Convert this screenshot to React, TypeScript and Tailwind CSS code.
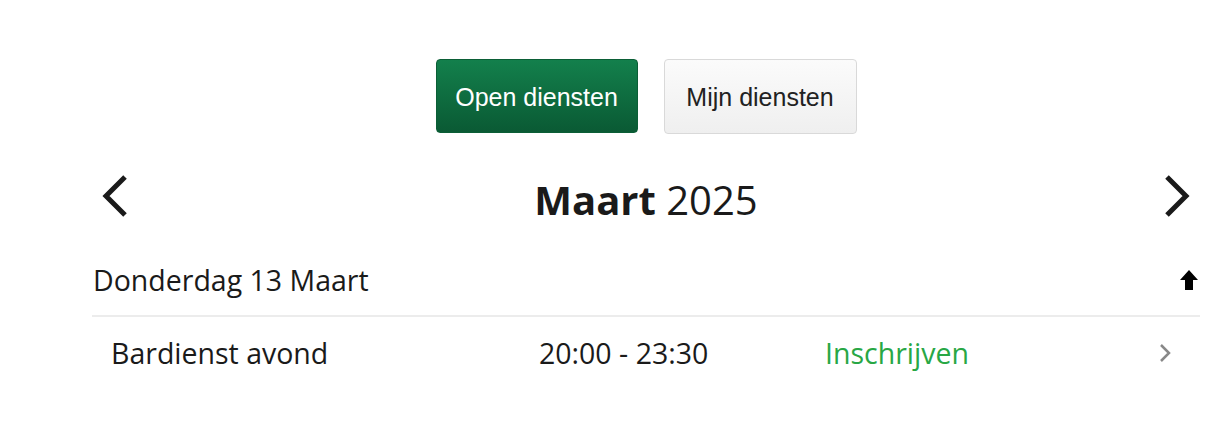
import React from "react";

export default function App() {
  return (
    <div className="w-[1226px] h-[440px] bg-white" style={{ fontFamily: '"Open Sans", sans-serif' }}>
      <div className="ml-[92px] w-[1108px] pt-[59px]">
        <div className="flex justify-center gap-[26px]" style={{ fontFamily: '"Liberation Sans", Arial, sans-serif' }}>
          <button className="w-[202px] h-[74px] pt-[3px] rounded-[4px] border border-[#0b5e36] bg-gradient-to-b from-[#13804c] to-[#0a5a34] text-white text-[25px]">
            Open diensten
          </button>
          <button className="w-[193px] h-[75px] pt-[3px] rounded-[4px] border border-[#d9d9d9] bg-gradient-to-b from-[#fbfbfb] to-[#efefef] text-[#222] text-[25px]">
            Mijn diensten
          </button>
        </div>
        <div className="flex items-center justify-between mt-[39px] h-[46px] px-[8px]">
          <svg width="32" height="46" viewBox="0 0 32 46">
            <path d="M25 4 L6 23 L25 42" fill="none" stroke="#1a1a1a" strokeWidth="5" />
          </svg>
          <div className="text-[40px] text-[#1a1a1a] leading-none pt-[8px]">
            <span className="font-bold">Maart</span> 2025
          </div>
          <svg width="32" height="46" viewBox="0 0 32 46">
            <path d="M7 4 L26 23 L7 42" fill="none" stroke="#1a1a1a" strokeWidth="5" />
          </svg>
        </div>
        <div className="flex items-center justify-between mt-[26px] h-[72px] border-b-2 border-[#ececec]">
          <span className="text-[28.5px] text-[#1a1a1a] pl-px">Donderdag 13 Maart</span>
          <svg width="20" height="22" viewBox="0 0 20 22" className="mr-[1px]">
            <path d="M10 1 L19 11 L14 11 L14 21 L6 21 L6 11 L1 11 Z" fill="#000" />
          </svg>
        </div>
        <div className="flex items-center h-[72px] text-[28.5px]">
          <span className="w-[447px] pl-[19px] text-[#1a1a1a]">Bardienst avond</span>
          <span className="w-[286px] text-[#1a1a1a]">20:00 - 23:30</span>
          <span className="flex-1 text-[#28a745]">Inschrijven</span>
          <svg width="14" height="22" viewBox="0 0 14 22" className="mr-[28px]">
            <path d="M3 3 L11 11 L3 19" fill="none" stroke="#888" strokeWidth="2.5" />
          </svg>
        </div>
      </div>
    </div>
  );
}
